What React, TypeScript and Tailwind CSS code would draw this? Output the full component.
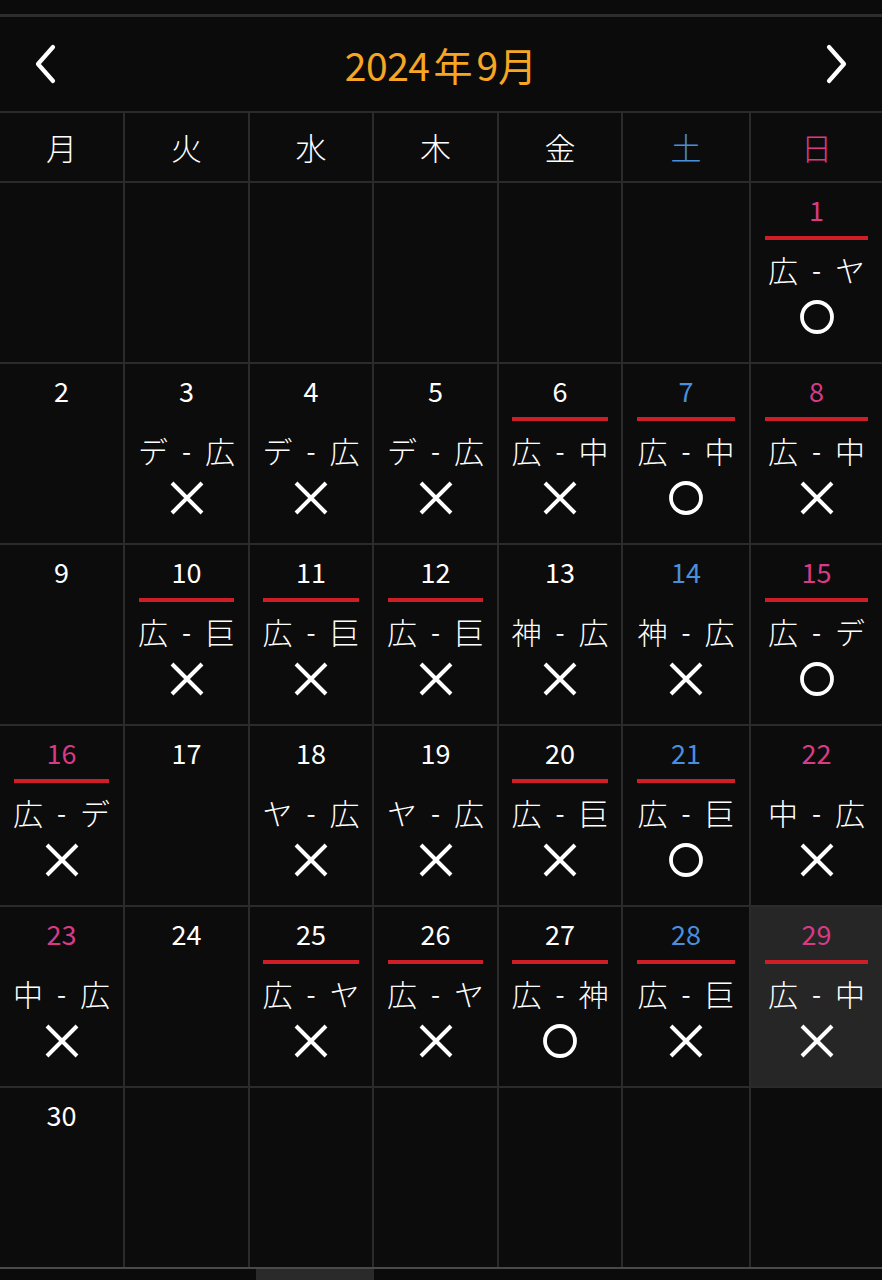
import React from "react";

type Game = {
  day: number;
  match?: [string, string];
  win?: boolean;
  home?: boolean;
  today?: boolean;
};

const weeks: (Game | null)[][] = [
  [null, null, null, null, null, null, { day: 1, match: ["広", "ヤ"], win: true, home: true }],
  [
    { day: 2 },
    { day: 3, match: ["デ", "広"], win: false },
    { day: 4, match: ["デ", "広"], win: false },
    { day: 5, match: ["デ", "広"], win: false },
    { day: 6, match: ["広", "中"], win: false, home: true },
    { day: 7, match: ["広", "中"], win: true, home: true },
    { day: 8, match: ["広", "中"], win: false, home: true },
  ],
  [
    { day: 9 },
    { day: 10, match: ["広", "巨"], win: false, home: true },
    { day: 11, match: ["広", "巨"], win: false, home: true },
    { day: 12, match: ["広", "巨"], win: false, home: true },
    { day: 13, match: ["神", "広"], win: false },
    { day: 14, match: ["神", "広"], win: false },
    { day: 15, match: ["広", "デ"], win: true, home: true },
  ],
  [
    { day: 16, match: ["広", "デ"], win: false, home: true },
    { day: 17 },
    { day: 18, match: ["ヤ", "広"], win: false },
    { day: 19, match: ["ヤ", "広"], win: false },
    { day: 20, match: ["広", "巨"], win: false, home: true },
    { day: 21, match: ["広", "巨"], win: true, home: true },
    { day: 22, match: ["中", "広"], win: false },
  ],
  [
    { day: 23, match: ["中", "広"], win: false },
    { day: 24 },
    { day: 25, match: ["広", "ヤ"], win: false, home: true },
    { day: 26, match: ["広", "ヤ"], win: false, home: true },
    { day: 27, match: ["広", "神"], win: true, home: true },
    { day: 28, match: ["広", "巨"], win: false, home: true },
    { day: 29, match: ["広", "中"], win: false, home: true, today: true },
  ],
  [{ day: 30 }, null, null, null, null, null, null],
];

// 祝日(月)
const holidays = [16, 23];

const labels = ["月", "火", "水", "木", "金", "土", "日"];

const font = { fontFamily: '"Noto Sans CJK JP", "Noto Sans", sans-serif' };

function Chevron({ dir }: { dir: "left" | "right" }) {
  return (
    <svg width="30" height="42" viewBox="0 0 30 42" fill="none">
      <path
        d={dir === "left" ? "M22 4 L7 21 L22 38" : "M8 4 L23 21 L8 38"}
        stroke="white"
        strokeWidth="4.2"
        strokeLinecap="round"
        strokeLinejoin="round"
      />
    </svg>
  );
}

function Mark({ win }: { win: boolean }) {
  if (win) {
    return (
      <svg width="36" height="36" viewBox="0 0 36 36">
        <circle cx="18" cy="18" r="15" fill="none" stroke="white" strokeWidth="3.8" />
      </svg>
    );
  }
  return (
    <svg width="36" height="36" viewBox="0 0 36 36">
      <path d="M3 3 L33 33 M33 3 L3 33" stroke="white" strokeWidth="4" />
    </svg>
  );
}

function DayCell({ game, col }: { game: Game | null; col: number }) {
  if (!game) return <div className="bg-[#0c0c0c]" />;
  const sunday = col === 6 || holidays.includes(game.day);
  const color = sunday ? "text-[#d83a86]" : col === 5 ? "text-[#4a8fdb]" : "text-white";
  return (
    <div className={`flex flex-col items-center pt-[10px] ${game.today ? "bg-[#262626]" : "bg-[#0c0c0c]"}`}>
      <div className={`h-[34px] text-[27px] leading-[34px] ${color}`}>{game.day}</div>
      <div className={`mt-[9px] h-[4px] w-[78%] ${game.home ? "bg-[#d01e28]" : ""}`} />
      {game.match && (
        <>
          <div className="mt-[9px] flex h-[40px] items-center gap-[14px] text-[30px] font-light leading-[40px] text-white">
            <span>{game.match[0]}</span>
            <span className="text-[26px] font-normal">-</span>
            <span>{game.match[1]}</span>
          </div>
          <div className="mt-[10px]">
            <Mark win={!!game.win} />
          </div>
        </>
      )}
    </div>
  );
}

export default function App() {
  return (
    <div className="flex h-[1280px] w-[882px] flex-col overflow-hidden bg-[#0b0b0b]" style={font}>
      <div className="h-[14px]" />
      <div className="h-[3px] bg-[#2e2e2e]" />
      <div className="flex h-[94px] items-center justify-between px-[31px]">
        <Chevron dir="left" />
        <div className="flex items-baseline gap-[4px] text-[39px] leading-none text-[#f6a623]">
          <span className="tracking-[-0.5px]">2024</span>
          <span>年</span>
          <span>9月</span>
        </div>
        <Chevron dir="right" />
      </div>
      <div className="grid grid-cols-[123px_123px_122px_123px_122px_126px_1fr] grid-rows-[68px_179px_179px_179px_179px_179px_179px] gap-[2px] border-t-2 border-[#2b2b2b] bg-[#2b2b2b]">
        {labels.map((l, i) => (
          <div
            key={l}
            className={`flex items-center justify-center bg-[#0c0c0c] text-[31px] font-light ${
              i === 5 ? "text-[#4a8fdb]" : i === 6 ? "text-[#d83a86]" : "text-white"
            }`}
          >
            {l}
          </div>
        ))}
        {weeks.map((week, w) =>
          week.map((g, c) => <DayCell key={`${w}-${c}`} game={g} col={c} />)
        )}
      </div>
      <div className="h-[2px] bg-[#4a4a4a]" />
      <div className="flex flex-1">
        <div className="w-[256px]" />
        <div className="w-[118px] bg-[#2a2a2a]" />
      </div>
    </div>
  );
}
